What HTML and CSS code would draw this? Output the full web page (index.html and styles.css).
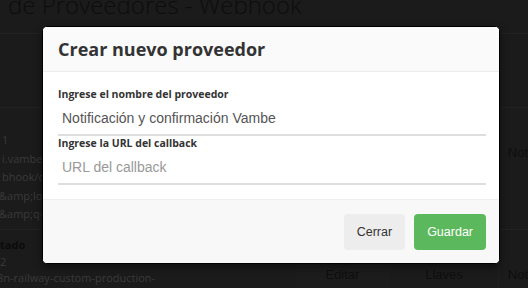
FILE: index.html
```html
<!DOCTYPE html>
<html lang="es">
<head>
<meta charset="utf-8">
<title>Proveedores - Webhook</title>
<link rel="stylesheet" href="styles.css">
</head>
<body>
<div class="page">
  <h1 class="page-title">de Proveedores - Webhook</h1>
  <div class="table">
    <div class="row row-head"></div>
    <div class="row row-1">
      <div class="cell cell-main">
        <div class="light">1</div>
        <div class="light">i.vambe</div>
        <div class="light">bhook/d</div>
        <div class="light clip">&amp;amp;loc</div>
        <div class="light clip">&amp;amp;q=</div>
      </div>
      <div class="cell cell-edit"></div>
      <div class="cell cell-keys"></div>
      <div class="cell cell-note">Not</div>
    </div>
    <div class="row row-2">
      <div class="cell cell-main">
        <div class="dark bold">tado</div>
        <div class="light">2</div>
        <div class="light clip">8n-railway-custom-production-</div>
      </div>
      <div class="cell cell-edit">Editar</div>
      <div class="cell cell-keys">Llaves</div>
      <div class="cell cell-note">Not</div>
    </div>
  </div>
</div>

<div class="modal">
  <div class="modal-header">
    <h4 class="modal-title">Crear nuevo proveedor</h4>
  </div>
  <div class="modal-body">
    <label class="field-label">Ingrese el nombre del proveedor</label>
    <div class="field-input">Notificación y confirmación Vambe</div>
    <label class="field-label">Ingrese la URL del callback</label>
    <div class="field-input placeholder">URL del callback</div>
  </div>
  <div class="modal-footer">
    <button class="btn btn-default">Cerrar</button>
    <button class="btn btn-success">Guardar</button>
  </div>
</div>
</body>
</html>
```
FILE: styles.css
```css
html, body {
  margin: 0;
  padding: 0;
}
body {
  width: 528px;
  height: 288px;
  overflow: hidden;
  position: relative;
  background: #1b1b1b;
  font-family: "Open Sans", "Liberation Sans", sans-serif;
}
.page {
  width: 528px;
}
.page-title {
  margin: -11px 0 0 8px;
  font-family: "Open Sans", sans-serif;
  font-weight: 300;
  font-size: 24px;
  line-height: 32px;
  color: #0d0d0d;
  white-space: nowrap;
}
.table {
  margin-top: 12px;
}
.row {
  display: flex;
  border-top: 1px solid #222;
}
.row-head {
  height: 73px;
}
.row-1 {
  height: 121px;
}
.row-2 {
  height: 60px;
}
.cell {
  font-family: "Liberation Sans", Arial, sans-serif;
  font-size: 13px;
  color: #0e0e0e;
  white-space: nowrap;
}
.cell-main {
  width: 296px;
  font-family: "Open Sans", sans-serif;
  font-size: 11px;
  line-height: 18.5px;
  padding-left: 2px;
}
.row-1 .cell-main {
  padding-top: 23px;
}
.row-2 .cell-main {
  padding-top: 7px;
  padding-left: 0;
  line-height: 16.5px;
}
.clip {
  margin-left: -3px;
}
.light {
  color: #3a3a3a;
}
.dark {
  color: #0b0b0b;
}
.bold {
  font-weight: 700;
}
.cell-edit {
  width: 96px;
  padding-top: 37px;
  text-align: center;
  background: #1c1c1c;
}
.cell-keys {
  width: 108px;
  padding-top: 37px;
  text-align: center;
}
.cell-note {
  padding-left: 9px;
  padding-top: 37px;
  border-left: 1px solid #1f1f1f;
}

/* Modal overlay */
.modal {
  position: absolute;
  left: 42px;
  top: 26px;
  width: 456px;
  height: 236px;
  box-sizing: content-box;
  border: 1px solid #000;
  border-radius: 5px;
  background: #fff;
  overflow: hidden;
  display: flex;
  flex-direction: column;
  box-shadow: 0 3px 9px rgba(0, 0, 0, 0.5);
}
.modal-header {
  background: #fafafa;
  padding: 12px 13px 12px 15px;
  border-bottom: 1px solid #ececec;
}
.modal-title {
  margin: 0;
  font-family: "Open Sans", sans-serif;
  font-weight: 700;
  font-size: 18px;
  line-height: 20px;
  color: #333;
}
.modal-body {
  padding: 15px 13px 14px 15px;
  display: flex;
  flex-direction: column;
}
.field-label {
  font-family: "Open Sans", sans-serif;
  font-weight: 700;
  font-size: 10.5px;
  line-height: 15px;
  color: #333;
}
.field-input {
  height: 32px;
  line-height: 32px;
  padding-left: 4px;
  border-bottom: 2px solid #dedede;
  font-family: "Liberation Sans", Arial, sans-serif;
  font-size: 14px;
  color: #555;
}
.field-input.placeholder {
  color: #999;
}
.modal-footer {
  flex: 1;
  background: #f8f8f8;
  border-top: 1px solid #efefef;
  padding: 14px 13px 0 15px;
  display: flex;
  justify-content: flex-end;
  align-items: flex-start;
  gap: 9px;
}
.btn {
  height: 36px;
  padding: 0 13px;
  border: none;
  border-radius: 4px;
  font-family: "Liberation Sans", Arial, sans-serif;
  font-size: 12.5px;
  cursor: pointer;
}
.btn-default {
  background: #ededed;
  color: #333;
}
.btn-success {
  background: #5cb85c;
  color: #fff;
}
```
